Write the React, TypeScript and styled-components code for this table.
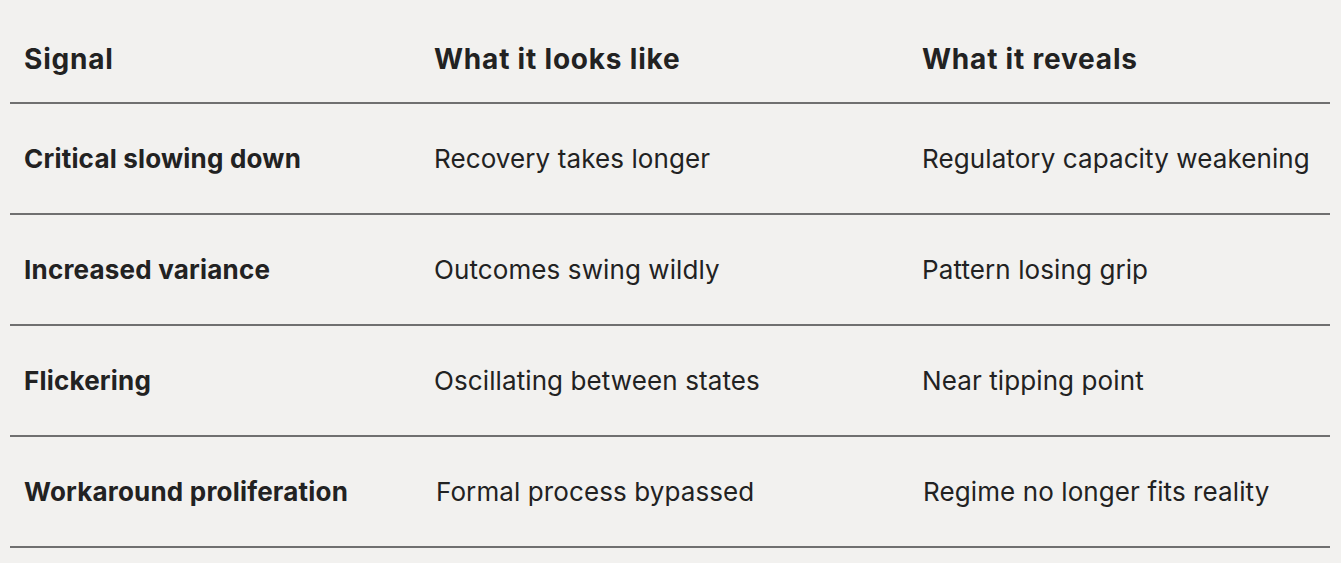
import React from 'react';
import styled, { createGlobalStyle } from 'styled-components';

const GlobalStyle = createGlobalStyle`
    html, body {
        margin: 0;
        padding: 0;
        background: #f2f1ef;
    }
    body {
        font-family: 'Inter', 'Noto Sans', sans-serif;
        color: #222222;
    }
`;

const Table = styled.div`
    padding: 15px 11px 0 10px;
`;

const Row = styled.div<{ $head?: boolean }>`
    display: grid;
    grid-template-columns: 410px 488px 1fr;
    align-items: center;
    height: ${props => (props.$head ? 87 : 109)}px;
    border-bottom: 2px solid #707070;
`;

const Cell = styled.div<{ $bold?: boolean; $shift?: number }>`
    padding-left: ${props => 14 + (props.$shift || 0)}px;
    font-size: 26px;
    font-weight: ${props => (props.$bold ? 700 : 400)};
    letter-spacing: ${props => (props.$bold ? 0.2 : 0.1)}px;
    white-space: nowrap;
`;

const HeadCell = styled(Cell)`
    font-size: 28px;
    font-weight: 700;
    letter-spacing: 0.8px;
`;

const rows = [
    ['Critical slowing down', 'Recovery takes longer', 'Regulatory capacity weakening'],
    ['Increased variance', 'Outcomes swing wildly', 'Pattern losing grip'],
    ['Flickering', 'Oscillating between states', 'Near tipping point'],
    ['Workaround proliferation', 'Formal process bypassed', 'Regime no longer fits reality'],
];

export default function App() {
    return (
        <>
            <GlobalStyle />
            <Table>
                <Row $head>
                    <HeadCell>Signal</HeadCell>
                    <HeadCell>What it looks like</HeadCell>
                    <HeadCell>What it reveals</HeadCell>
                </Row>
                {rows.map((r, i) => (
                    <Row key={r[0]}>
                        <Cell $bold>{r[0]}</Cell>
                        <Cell $shift={i === 3 ? 2 : 0}>{r[1]}</Cell>
                        <Cell $shift={i === 3 ? 1 : 0}>{r[2]}</Cell>
                    </Row>
                ))}
            </Table>
        </>
    );
}
